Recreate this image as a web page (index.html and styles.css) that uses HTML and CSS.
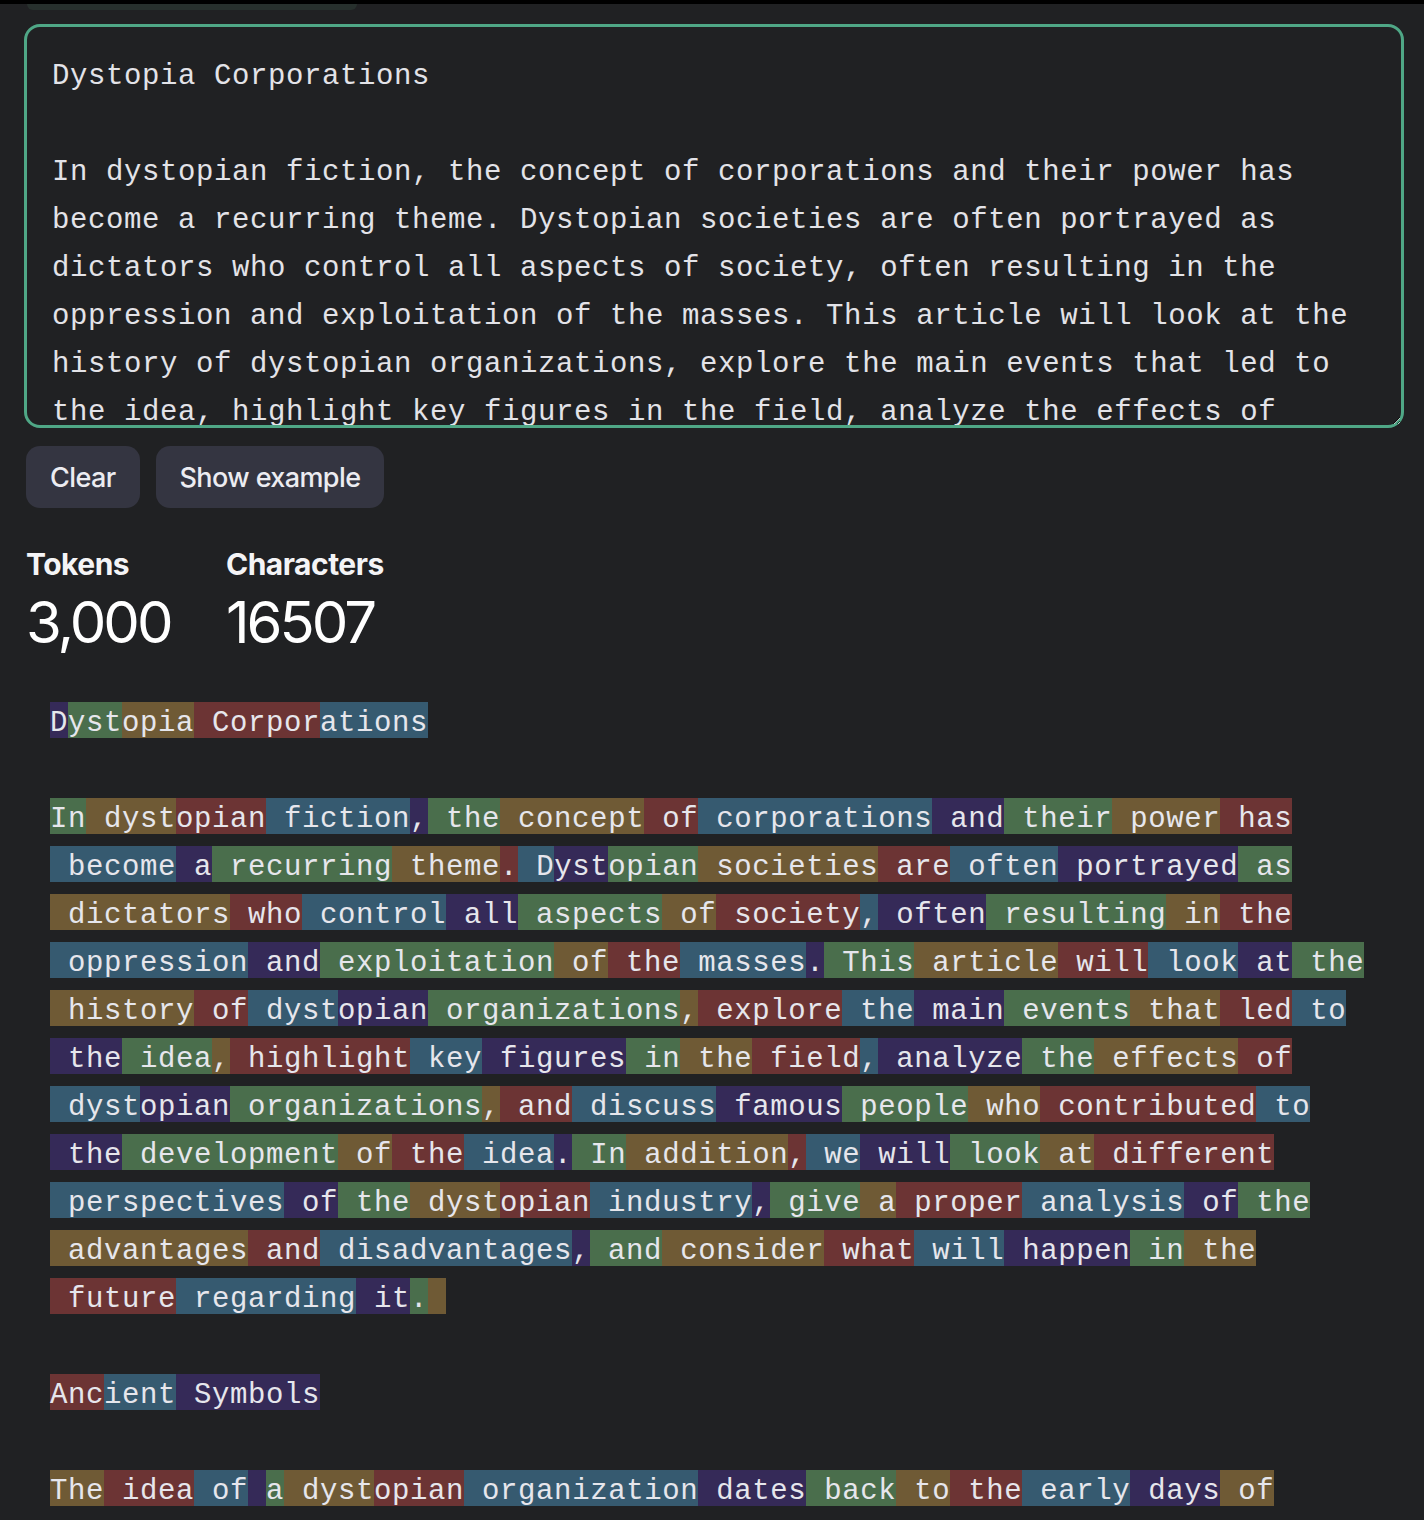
FILE: index.html
```html
<!DOCTYPE html>
<html lang="en">
<head>
<meta charset="utf-8">
<title>Tokenizer</title>
<link rel="stylesheet" href="styles.css">
</head>
<body>
<div class="topbar"></div>
<div class="tab-edge"></div>
<main class="page">
<textarea class="input" spellcheck="false">Dystopia Corporations

In dystopian fiction, the concept of corporations and their power has become a recurring theme. Dystopian societies are often portrayed as dictators who control all aspects of society, often resulting in the oppression and exploitation of the masses. This article will look at the history of dystopian organizations, explore the main events that led to the idea, highlight key figures in the field, analyze the effects of dystopian organizations, and discuss famous people who contributed to the development of the idea. In addition, we will look at different perspectives of the dystopian industry, give a proper analysis of the advantages and disadvantages, and consider what will happen in the future regarding it.

Ancient Symbols

The idea of a dystopian organization dates back to the early days of</textarea>
<div class="actions">
<button class="btn">Clear</button>
<button class="btn">Show example</button>
</div>
<div class="stats">
<div class="stat stat-tokens"><div class="stat-label">Tokens</div><div class="stat-value">3,000</div></div>
<div class="stat"><div class="stat-label">Characters</div><div class="stat-value">16507</div></div>
</div>
<div class="tokens">
<div class="line"><span class="p">D</span><span class="g">yst</span><span class="o">opia</span><span class="r"> Corpor</span><span class="b">ations</span></div>
<div class="line"></div>
<div class="line"><span class="g">In</span><span class="o"> dyst</span><span class="r">opian</span><span class="b"> fiction</span><span class="p">,</span><span class="g"> the</span><span class="o"> concept</span><span class="r"> of</span><span class="b"> corporations</span><span class="p"> and</span><span class="g"> their</span><span class="o"> power</span><span class="r"> has</span></div>
<div class="line"><span class="b"> become</span><span class="p"> a</span><span class="g"> recurring</span><span class="o"> theme</span><span class="r">.</span><span class="b"> D</span><span class="p">yst</span><span class="g">opian</span><span class="o"> societies</span><span class="r"> are</span><span class="b"> often</span><span class="p"> portrayed</span><span class="g"> as</span></div>
<div class="line"><span class="o"> dictators</span><span class="r"> who</span><span class="b"> control</span><span class="p"> all</span><span class="g"> aspects</span><span class="o"> of</span><span class="r"> society</span><span class="b">,</span><span class="p"> often</span><span class="g"> resulting</span><span class="o"> in</span><span class="r"> the</span></div>
<div class="line"><span class="b"> oppression</span><span class="p"> and</span><span class="g"> exploitation</span><span class="o"> of</span><span class="r"> the</span><span class="b"> masses</span><span class="p">.</span><span class="g"> This</span><span class="o"> article</span><span class="r"> will</span><span class="b"> look</span><span class="p"> at</span><span class="g"> the</span></div>
<div class="line"><span class="o"> history</span><span class="r"> of</span><span class="b"> dyst</span><span class="p">opian</span><span class="g"> organizations</span><span class="o">,</span><span class="r"> explore</span><span class="b"> the</span><span class="p"> main</span><span class="g"> events</span><span class="o"> that</span><span class="r"> led</span><span class="b"> to</span></div>
<div class="line"><span class="p"> the</span><span class="g"> idea</span><span class="o">,</span><span class="r"> highlight</span><span class="b"> key</span><span class="p"> figures</span><span class="g"> in</span><span class="o"> the</span><span class="r"> field</span><span class="b">,</span><span class="p"> analyze</span><span class="g"> the</span><span class="o"> effects</span><span class="r"> of</span></div>
<div class="line"><span class="b"> dyst</span><span class="p">opian</span><span class="g"> organizations</span><span class="o">,</span><span class="r"> and</span><span class="b"> discuss</span><span class="p"> famous</span><span class="g"> people</span><span class="o"> who</span><span class="r"> contributed</span><span class="b"> to</span></div>
<div class="line"><span class="p"> the</span><span class="g"> development</span><span class="o"> of</span><span class="r"> the</span><span class="b"> idea</span><span class="p">.</span><span class="g"> In</span><span class="o"> addition</span><span class="r">,</span><span class="b"> we</span><span class="p"> will</span><span class="g"> look</span><span class="o"> at</span><span class="r"> different</span></div>
<div class="line"><span class="b"> perspectives</span><span class="p"> of</span><span class="g"> the</span><span class="o"> dyst</span><span class="r">opian</span><span class="b"> industry</span><span class="p">,</span><span class="g"> give</span><span class="o"> a</span><span class="r"> proper</span><span class="b"> analysis</span><span class="p"> of</span><span class="g"> the</span></div>
<div class="line"><span class="o"> advantages</span><span class="r"> and</span><span class="b"> disadvantages</span><span class="p">,</span><span class="g"> and</span><span class="o"> consider</span><span class="r"> what</span><span class="b"> will</span><span class="p"> happen</span><span class="g"> in</span><span class="o"> the</span></div>
<div class="line"><span class="r"> future</span><span class="b"> regarding</span><span class="p"> it</span><span class="g">.</span><span class="o"> </span></div>
<div class="line"></div>
<div class="line"><span class="r">Anc</span><span class="b">ient</span><span class="p"> Symbols</span></div>
<div class="line"></div>
<div class="line"><span class="o">The</span><span class="r"> idea</span><span class="b"> of</span><span class="p"> </span><span class="g">a</span><span class="o"> dyst</span><span class="r">opian</span><span class="b"> organization</span><span class="p"> dates</span><span class="g"> back</span><span class="o"> to</span><span class="r"> the</span><span class="b"> early</span><span class="p"> days</span><span class="o"> of</span></div>
</div>
</main>
</body>
</html>
```

FILE: styles.css
```css
* {
  box-sizing: border-box;
}

html, body {
  margin: 0;
  padding: 0;
  background: #202123;
  overflow: hidden;
}

body {
  font-family: Inter, "Noto Sans", "Liberation Sans", sans-serif;
  color: #ececf1;
}

.topbar {
  height: 4px;
  background: #000;
}

.tab-edge {
  margin-left: 27px;
  width: 330px;
  height: 6px;
  background: #27302d;
  border-radius: 0 0 10px 10px;
}

.page {
  padding: 14px 20px 0 24px;
}

.input {
  display: block;
  width: 1380px;
  height: 404px;
  margin: 0;
  padding: 26px 22px 0 25px;
  border: 3px solid #4fa786;
  border-radius: 16px;
  background: #202123;
  color: #e3e3e8;
  font-family: "Liberation Mono", "DejaVu Sans Mono", monospace;
  font-size: 29px;
  line-height: 48px;
  letter-spacing: 0.6px;
  resize: both;
  overflow: hidden;
  outline: none;
}

.actions {
  display: flex;
  gap: 16px;
  margin: 18px 0 0 2px;
}

.btn {
  height: 62px;
  padding: 0 24px;
  border: none;
  border-radius: 14px;
  background: #343541;
  color: #ececf1;
  font-family: Inter, "Noto Sans", "Liberation Sans", sans-serif;
  font-size: 27px;
  font-weight: 500;
  letter-spacing: -0.6px;
}

.stats {
  display: flex;
  margin: 39px 0 0 2px;
}

.stat-tokens {
  width: 200px;
}

.stat-label {
  font-size: 30px;
  line-height: 34px;
  font-weight: 700;
  letter-spacing: -0.5px;
  color: #f4f4f6;
}

.stat-value {
  margin-top: 9px;
  font-size: 58px;
  line-height: 64px;
  font-weight: 400;
  letter-spacing: -3px;
  color: #ffffff;
}

.tokens {
  margin: 42px 0 0 26px;
  font-family: "Liberation Mono", "DejaVu Sans Mono", monospace;
  font-size: 29px;
  letter-spacing: 0.6px;
  color: #e6e6ec;
}

.line {
  height: 48px;
  padding-top: 6px;
  line-height: 36px;
  white-space: pre;
}

.line span {
  display: inline-block;
  vertical-align: top;
  height: 36px;
  padding-top: 7px;
  line-height: 29px;
}

.p { background: #352a58; }
.g { background: #4a6e4c; }
.o { background: #6f5a35; }
.r { background: #6c3434; }
.b { background: #365a70; }
```
